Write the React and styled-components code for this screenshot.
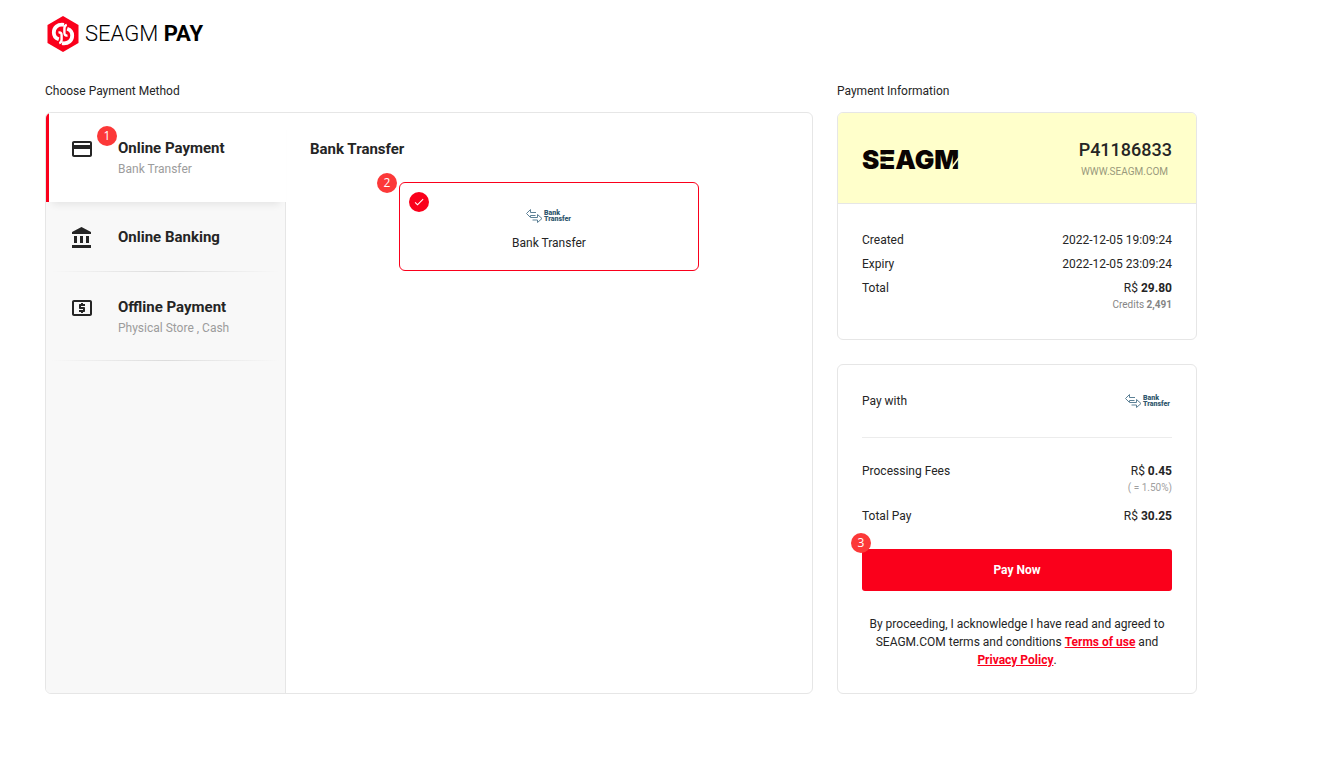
import React, { useState } from "react";
import styled, { createGlobalStyle, css } from "styled-components";
import { MdCreditCard, MdLocalAtm, MdCheck } from "react-icons/md";

const GlobalStyle = createGlobalStyle`
  * { box-sizing: border-box; }
  body {
    margin: 0;
    background: #fff;
    color: #252525;
    font: 400 12px/18px Roboto, "Liberation Sans", sans-serif;
  }
  button, input { font: inherit; color: inherit; }
  h1, h2, p, dl, dt, dd { margin: 0; font: inherit; }
`;

const Page = styled.div`
  padding: 14px 145px 24px 45px;
`;

const Brand = styled.header`
  display: flex;
  align-items: center;
  gap: 6px;
  height: 40px;
  padding-left: 2px;
  margin-bottom: 28px;
`;

const BrandName = styled.h1`
  font-size: 22px;
  line-height: 40px;
  font-weight: 300;
  color: #000;
  strong { font-weight: 700; }
`;

const Columns = styled.div`
  display: grid;
  grid-template-columns: minmax(0, 1fr) 360px;
  gap: 24px;
`;

const Column = styled.section`
  display: flex;
  flex-direction: column;
`;

const ColumnTitle = styled.h2`
  margin-bottom: 12px;
`;

const Card = styled.div`
  border: 1px solid #e6e6e6;
  border-radius: 6px;
  overflow: ${(p) => (p.$clip ? "hidden" : "visible")};
  & + & { margin-top: 24px; }
`;

const MethodCard = styled(Card)`
  flex: 1;
  display: grid;
  grid-template-columns: 240px minmax(0, 1fr);
`;

const Sidebar = styled.nav`
  background: #f8f8f8;
  border-right: 1px solid #e6e6e6;
  display: flex;
  flex-direction: column;
`;

const MethodButton = styled.button`
  position: relative;
  display: flex;
  align-items: flex-start;
  gap: 24px;
  padding: 24px 24px 22px;
  border: 0;
  text-align: left;
  cursor: pointer;
  background: linear-gradient(90deg, #f8f8f8 2%, #dcdcdc 50%, #f8f8f8 98%) bottom / 100% 1px no-repeat;
  ${(p) =>
    p.$active &&
    css`
      margin-right: -1px;
      background: #fff;
      box-shadow: inset 3px 0 0 #fa001b, 0 8px 8px -6px rgba(0, 0, 0, 0.09);
    `}
  > svg { flex: none; }
`;

const MethodName = styled.span`
  display: block;
  font-size: 15px;
  line-height: 22px;
  font-weight: 700;
`;

const MethodNote = styled.span`
  display: block;
  line-height: 21px;
  color: #9c9c9c;
`;

const Step = styled.span`
  position: absolute;
  left: ${(p) => p.$x}px;
  top: ${(p) => p.$y}px;
  width: 20px;
  height: 20px;
  border-radius: 50%;
  background: #fc3838;
  color: #fff;
  font: 400 12px/20px "Open Sans", sans-serif;
  text-align: center;
`;

const Main = styled.div`
  padding: 24px;
`;

const MainTitle = styled.h2`
  margin-bottom: 20px;
  font-size: 15px;
  line-height: 25px;
  font-weight: 700;
`;

const Option = styled.label`
  position: relative;
  display: flex;
  flex-direction: column;
  align-items: center;
  gap: 6px;
  width: 300px;
  max-width: 100%;
  margin: 0 auto;
  padding: 21px 24px 18px;
  border: 1px solid #fa001b;
  border-radius: 6px;
  cursor: pointer;
`;

const OptionRadio = styled.input`
  position: absolute;
  inset: 0;
  margin: 0;
  opacity: 0;
`;

const Tick = styled.span`
  position: absolute;
  left: 9px;
  top: 9px;
  display: grid;
  place-items: center;
  width: 20px;
  height: 20px;
  border-radius: 50%;
  background: #fa001b;
  color: #fff;
`;

const Merchant = styled.div`
  display: flex;
  align-items: center;
  justify-content: space-between;
  padding: 24px;
  border-bottom: 1px solid #e6e6e6;
  border-radius: 5px 5px 0 0;
  background: #ffffcb;
`;

const MerchantInfo = styled.div`
  text-align: right;
`;

const OrderId = styled.p`
  margin-bottom: 1px;
  font-size: 18px;
  line-height: 26px;
  font-weight: 500;
`;

const Site = styled.p`
  padding-right: 4px;
  font-size: 10px;
  line-height: 15px;
  color: #99997c;
`;

const Details = styled.dl`
  padding: 24px;
`;

const DetailRow = styled.div`
  display: flex;
  justify-content: space-between;
  padding: 3px 0;
  dd { text-align: right; }
  strong { font-weight: 700; }
`;

const Small = styled.span`
  display: block;
  font-size: 10px;
  line-height: 15px;
  color: ${(p) => (p.$light ? "#a0a0a0" : "#858585")};
`;

const PayCard = styled(Card)`
  padding: 24px;
`;

const PayWith = styled.div`
  display: flex;
  align-items: center;
  justify-content: space-between;
  padding-bottom: 24px;
  border-bottom: 1px solid #ececec;
`;

const Fees = styled.dl`
  display: grid;
  gap: 12px;
  padding: 24px 0;
  ${DetailRow} { padding: 0; }
`;

const PayAction = styled.div`
  position: relative;
`;

const PayButton = styled.button`
  display: block;
  width: 100%;
  height: 42px;
  border: 0;
  border-radius: 3px;
  background: #fa001b;
  color: #fff;
  font-weight: 700;
  cursor: pointer;
`;

const Terms = styled.p`
  margin-top: 24px;
  text-align: center;
  a { color: #fa001b; font-weight: 700; }
`;

function Emblem() {
  const hook = (
    <>
      <path d="M17 9.800C10.500 8.800 6.800 12.800 6.800 17.500c0 3.300 1.700 5.700 5 6.800" strokeWidth="3.800" />
      <path d="M11.500 17.600c2.400-.6 3.100.9 3.100 2.900v4c0 1.800-.8 3.200-2.400 3.600" strokeWidth="2.400" />
    </>
  );
  return (
    <svg width="32" height="38" viewBox="0 0 32 38" aria-hidden="true">
      <path d="M16 1 31.500 10v18L16 37 .5 28V10z" fill="#fa001b" />
      <g fill="none" stroke="#fff">
        {hook}
        <g transform="rotate(180 16 19)">{hook}</g>
      </g>
    </svg>
  );
}

function BankIcon() {
  return (
    <svg width="24" height="24" viewBox="0 0 24 24" fill="currentColor" aria-hidden="true">
      <path d="M4 10v7h3v-7H4zm6 0v7h3v-7h-3zM2 22h19v-3H2v3zm14-12v7h3v-7h-3zM11.500 1 2 6v2h19V6l-9.500-5z" />
    </svg>
  );
}

function MerchantLogo() {
  return (
    <svg width="110" height="36" viewBox="0 0 110 36" role="img" aria-label="SEAGM">
      <text x="0" y="29" fontFamily="Inter, sans-serif" fontWeight="900" fontSize="26" fill="#0b0403">SEAGM</text>
      <g stroke="#ffffcb" fill="none">
        <path d="M17.500 15.500h9M17.500 22.500h9" strokeWidth="2" />
        <path d="M99 15 87 31" strokeWidth="1.500" />
      </g>
    </svg>
  );
}

function TransferLogo() {
  return (
    <svg width="48" height="24" viewBox="3 0 48 24" role="img" aria-label="Bank Transfer">
      <g fill="none" stroke="#5d8196" strokeWidth="1" strokeLinejoin="round">
        <path d="M14 8.500H8.500V5.500L4.500 9.500l4 4v-2h5" />
        <path d="M9 13.500h6.500v-3l4.500 4-4.500 4v-2.500h-5" />
      </g>
      <g fontFamily="Roboto, sans-serif" fontWeight="900" fontSize="7" fill="#32586f">
        <text x="22" y="11">Bank</text>
        <text x="22" y="17">Transfer</text>
      </g>
    </svg>
  );
}

const METHODS = [
  { id: "payment", name: "Online Payment", note: "Bank Transfer", icon: <MdCreditCard size={24} />, step: 1 },
  { id: "banking", name: "Online Banking", icon: <BankIcon /> },
  { id: "offline", name: "Offline Payment", note: "Physical Store , Cash", icon: <MdLocalAtm size={24} /> },
];

export default function App() {
  const [active, setActive] = useState("payment");
  return (
    <>
      <GlobalStyle />
      <Page>
        <Brand>
          <Emblem />
          <BrandName>SEAGM <strong>PAY</strong></BrandName>
        </Brand>
        <Columns>
          <Column>
            <ColumnTitle>Choose Payment Method</ColumnTitle>
            <MethodCard $clip>
              <Sidebar>
                {METHODS.map(({ id, name, note, icon, step }) => (
                  <MethodButton key={id} type="button" $active={active === id} onClick={() => setActive(id)}>
                    {icon}
                    <span>
                      <MethodName>{name}</MethodName>
                      {note && <MethodNote>{note}</MethodNote>}
                    </span>
                    {step && <Step $x={51} $y={13}>{step}</Step>}
                  </MethodButton>
                ))}
              </Sidebar>
              <Main>
                <MainTitle>Bank Transfer</MainTitle>
                <Option>
                  <OptionRadio type="radio" name="channel" defaultChecked />
                  <Tick><MdCheck size={12} /></Tick>
                  <TransferLogo />
                  <span>Bank Transfer</span>
                  <Step $x={-23} $y={-10}>2</Step>
                </Option>
              </Main>
            </MethodCard>
          </Column>
          <Column>
            <ColumnTitle>Payment Information</ColumnTitle>
            <Card>
              <Merchant>
                <MerchantLogo />
                <MerchantInfo>
                  <OrderId>P41186833</OrderId>
                  <Site>WWW.SEAGM.COM</Site>
                </MerchantInfo>
              </Merchant>
              <Details>
                <DetailRow><dt>Created</dt><dd>2022-12-05 19:09:24</dd></DetailRow>
                <DetailRow><dt>Expiry</dt><dd>2022-12-05 23:09:24</dd></DetailRow>
                <DetailRow>
                  <dt>Total</dt>
                  <dd>R$ <strong>29.80</strong><Small>Credits <strong>2,491</strong></Small></dd>
                </DetailRow>
              </Details>
            </Card>
            <PayCard>
              <PayWith><span>Pay with</span><TransferLogo /></PayWith>
              <Fees>
                <DetailRow>
                  <dt>Processing Fees</dt>
                  <dd>R$ <strong>0.45</strong><Small $light>( = 1.50%)</Small></dd>
                </DetailRow>
                <DetailRow><dt>Total Pay</dt><dd>R$ <strong>30.25</strong></dd></DetailRow>
              </Fees>
              <PayAction>
                <PayButton type="button">Pay Now</PayButton>
                <Step $x={-11} $y={-16}>3</Step>
              </PayAction>
              <Terms>
                By proceeding, I acknowledge I have read and agreed to SEAGM.COM terms and conditions{" "}
                <a href="#terms">Terms of use</a> and <a href="#privacy">Privacy Policy</a>.
              </Terms>
            </PayCard>
          </Column>
        </Columns>
      </Page>
    </>
  );
}
